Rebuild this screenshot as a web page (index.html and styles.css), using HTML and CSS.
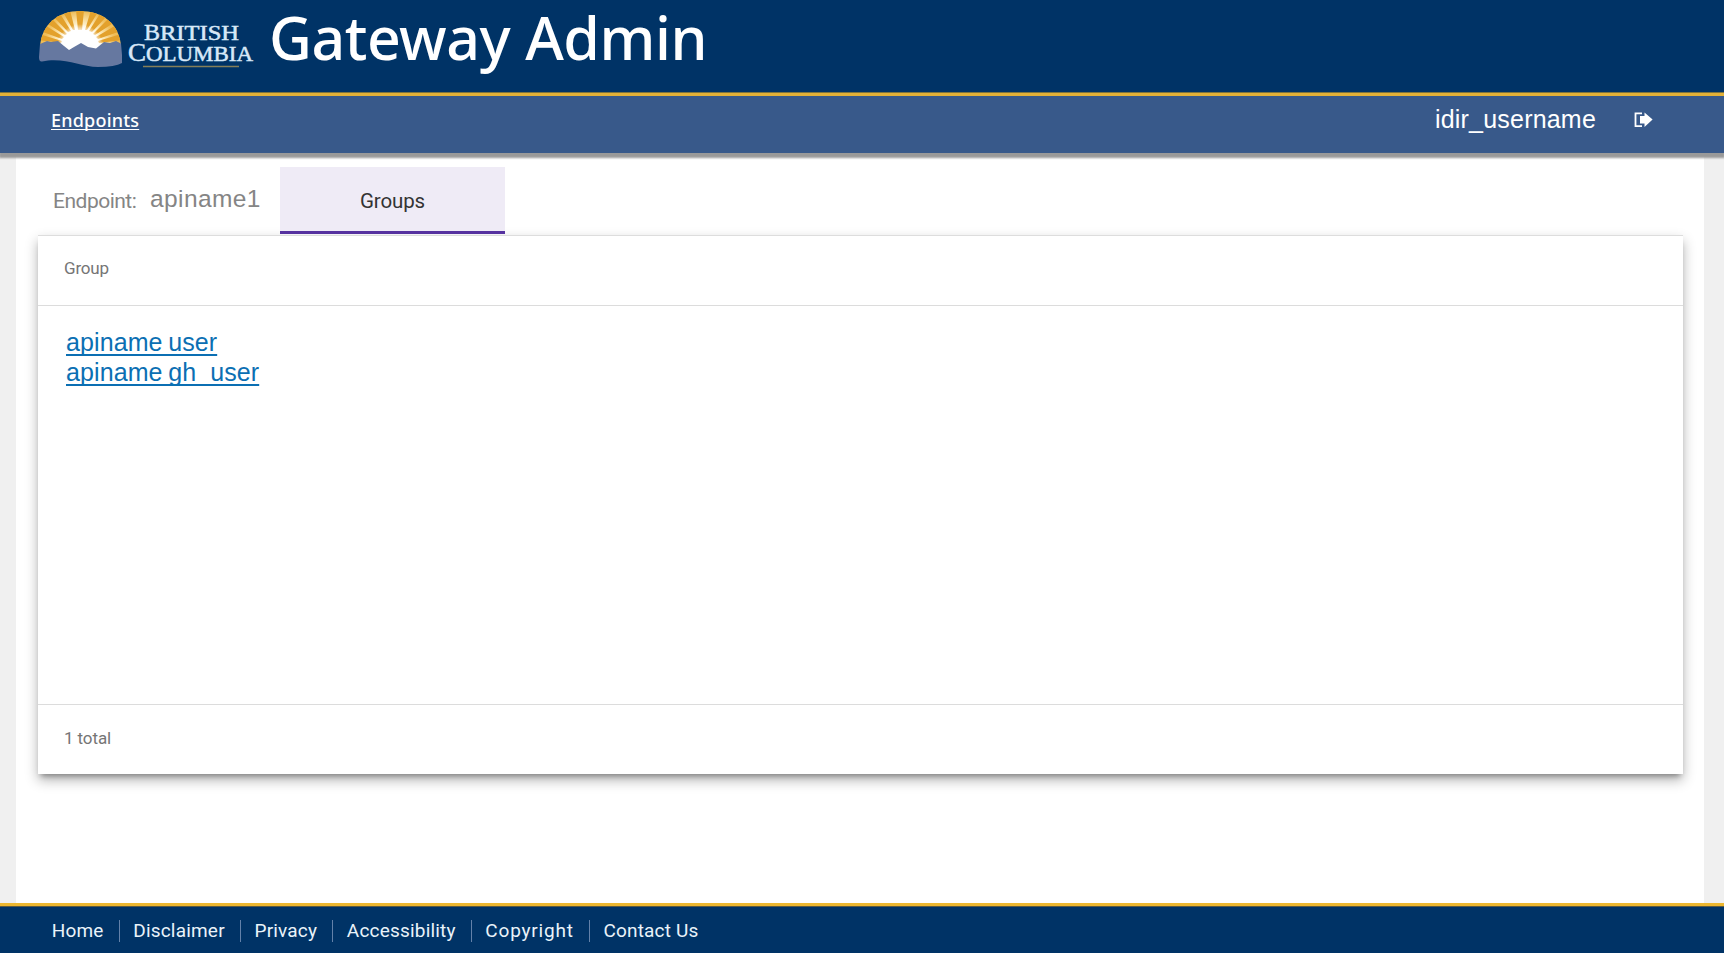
FILE: index.html
```html
<!DOCTYPE html>
<html lang="en">
<head>
<meta charset="utf-8">
<title>Gateway Admin</title>
<link rel="stylesheet" href="styles.css">
</head>
<body>
<header class="banner">
  <svg class="logo" width="220" height="66" viewBox="36 6 220 66" role="img" aria-label="British Columbia">
    <defs>
      <clipPath id="dome"><path d="M40 46C42 24 58 11 80 11s39 12 41 35l-10 5H48z"/></clipPath>
      <radialGradient id="sun" gradientUnits="userSpaceOnUse" cx="80" cy="47" r="36">
        <stop offset="0.5" stop-color="#fff"/><stop offset="0.65" stop-color="#fdeec4"/><stop offset="1" stop-color="#efbd58"/>
      </radialGradient>
      <radialGradient id="glow" gradientUnits="userSpaceOnUse" cx="80" cy="48" r="24">
        <stop offset="0.68" stop-color="#fff"/><stop offset="1" stop-color="#fff" stop-opacity="0"/>
      </radialGradient>
    </defs>
    <g clip-path="url(#dome)">
      <rect x="38" y="10" width="86" height="42" fill="url(#sun)"/>
      <path fill="#e3a12c" d="M78 30L76 10h8l-2 20zM73 30L63 12l7-2 5 20zM68 32L53 16l6-4 12 19zM65 35L45 22l5-5 17 17zM62 39L40 31l3-7 21 13zM61 43L38 40l1-6 23 7zM87 30L98 12l-7-2-6 20zM92 32l15-16-6-4-12 19zM95 35l20-13-5-5-17 17zM98 39l23-8-3-7-22 13zM99 43l23-3-1-6-23 7z"/>
      <circle cx="80" cy="48" r="24" fill="url(#glow)"/>
    </g>
    <path fill="#6678a0" d="M40 44L47 41L51 42L58 41L64 46L69 50L74 47L81 43L88 47L96 48.500L104 42L110 43L116 41L121 43.500L122 55V63Q115 67 98 67C80 67 65 57 42 61.500Q39 62 39 57Z"/>
    <g class="wordmark">
      <text x="144" y="39.5" font-size="24" textLength="16" lengthAdjust="spacingAndGlyphs">B</text>
      <text x="160" y="39.5" font-size="20" textLength="79" lengthAdjust="spacingAndGlyphs">RITISH</text>
      <text x="128" y="61" font-size="26" textLength="18" lengthAdjust="spacingAndGlyphs">C</text>
      <text x="146" y="61" font-size="21" textLength="107" lengthAdjust="spacingAndGlyphs">OLUMBIA</text>
    </g>
    <path d="M143 66.500h96" stroke="#857f59" stroke-width="1.400"/>
  </svg>
  <h1 class="title">Gateway Admin</h1>
</header>
<nav class="nav">
  <a class="nav-link" href="#">Endpoints</a>
  <div class="account">
    <span class="username">idir_username</span>
    <svg class="logout" width="20" height="16" viewBox="0 0 20 16"><path d="M8 1.300H1.500v12.900H8" fill="none" stroke="#fff" stroke-width="1.800"/><path d="M10.500 .5L18.600 7.500 10.500 15v-3.500H6V4h4.500z" fill="#fff"/></svg>
  </div>
</nav>
<main class="page">
  <div class="tabs">
    <div class="crumb"><span class="crumb-label">Endpoint:</span><span class="crumb-name">apiname1</span></div>
    <div class="tab">Groups</div>
  </div>
  <section class="card">
    <div class="card-head">Group</div>
    <div class="card-body">
      <a href="#">apiname user</a>
      <a href="#">apiname gh_user</a>
    </div>
    <div class="card-foot">1 total</div>
  </section>
</main>
<footer class="footer">
  <a href="#">Home</a>
  <a href="#">Disclaimer</a>
  <a href="#">Privacy</a>
  <a href="#">Accessibility</a>
  <a class="wide" href="#">Copyright</a>
  <a href="#">Contact Us</a>
</footer>
</body>
</html>
```
FILE: styles.css
```css
* { box-sizing: border-box; }
body {
  margin: 0;
  height: 953px;
  display: flex;
  flex-direction: column;
  overflow: hidden;
  background: #f0f0f0;
  font-family: Roboto, sans-serif;
}
.banner {
  flex: none;
  display: flex;
  height: 96px;
  padding: 6px 0 0 36px;
  background: #036;
  border-bottom: 3px solid #e3b137;
  box-shadow: inset 0 -1px #7d7440;
}
.logo { flex: none; }
.wordmark { font-family: "Liberation Serif", serif; fill: #d7e8f8; stroke: #d7e8f8; stroke-width: .5px; }
.title {
  margin: -9px 0 0 13px;
  font: 500 59px/80px "Noto Sans", sans-serif;
  letter-spacing: -.45px;
  color: #fff;
  white-space: nowrap;
}
.nav {
  flex: none;
  position: relative;
  z-index: 1;
  display: flex;
  justify-content: space-between;
  height: 57px;
  padding: 0 70px 0 51px;
  background: #38598a;
  box-shadow: 0 4px 2px 1px #999;
}
.nav-link {
  font: 500 18px/48px "Noto Sans", sans-serif;
  letter-spacing: .2px;
  color: #fff;
  text-underline-offset: 2px;
  text-decoration-skip-ink: none;
}
.account { display: flex; align-items: flex-start; }
.username { font: 25px/47px "Liberation Sans", sans-serif; letter-spacing: .2px; color: #fff; }
.logout { margin: 16px 0 0 38px; }
.page {
  flex: 1;
  display: flex;
  flex-direction: column;
  margin: 0 20px 0 16px;
  padding: 14px 21px 0 22px;
  background: #fff;
}
.tabs { position: relative; z-index: 1; display: flex; height: 67px; margin-bottom: 1px; }
.crumb { display: flex; width: 242px; padding-left: 15px; color: #858585; white-space: nowrap; }
.crumb-label { width: 97px; font-size: 21px; line-height: 68px; letter-spacing: -.5px; }
.crumb-name { font: 24.5px/64px "Liberation Sans", sans-serif; letter-spacing: .4px; }
.tab {
  width: 225px;
  background: #efebf6;
  border-bottom: 3px solid #5632a0;
  color: #333;
  font-size: 20.5px;
  line-height: 68px;
  letter-spacing: -.15px;
  text-align: center;
}
.card {
  display: flex;
  flex-direction: column;
  height: 539px;
  background: #fff;
  border-top: 1px solid #ddd;
  box-shadow: 0 5px 5px -3px rgba(0,0,0,.3), 0 6px 12px rgba(0,0,0,.3);
}
.card-head { height: 70px; padding-left: 26px; border-bottom: 1px solid #dcdcdc; color: #757575; font-size: 17px; line-height: 64px; letter-spacing: -.2px; }
.card-body { flex: 1; display: flex; flex-direction: column; align-items: flex-start; padding: 21px 28px; }
.card-body a {
  font: 25px/30px "Liberation Sans", sans-serif;
  letter-spacing: .1px;
  word-spacing: -1.5px;
  color: #0b6fb3;
  text-decoration-thickness: 2px;
  text-underline-offset: 3px;
  text-decoration-skip-ink: none;
}
.card-foot { height: 70px; padding-left: 26px; border-top: 1px solid #dcdcdc; color: #757575; font-size: 17px; line-height: 67px; letter-spacing: -.1px; }
.footer {
  flex: none;
  display: flex;
  align-items: flex-start;
  height: 50px;
  padding: 14px 38px 0;
  background: #036;
  border-top: 3px solid #edb72f;
  box-shadow: inset 0 1px #5c5a42;
}
.footer a { padding: 0 15px 0 13.7px; color: #eaf3fa; font-size: 19px; line-height: 22px; letter-spacing: .19px; text-decoration: none; }
.footer a.wide { letter-spacing: .8px; }
.footer a + a { border-left: 1px solid #6381a9; }
```
